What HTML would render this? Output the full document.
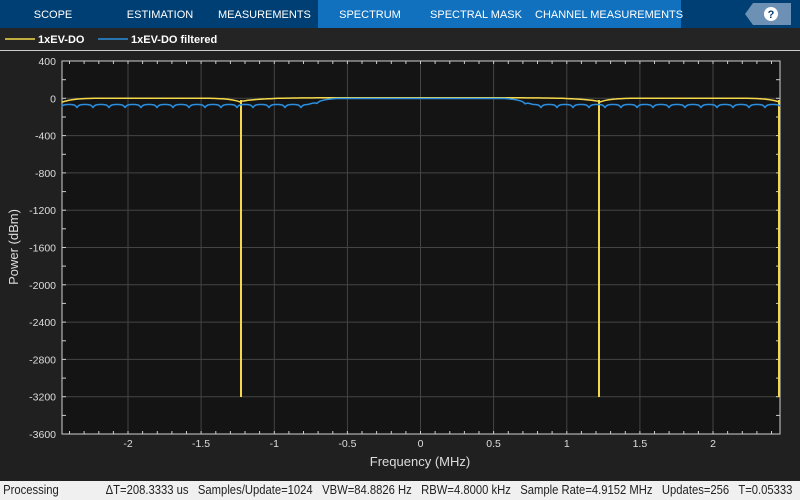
<!DOCTYPE html>
<html><head><meta charset="utf-8"><style>
body{margin:0;width:800px;height:500px;background:#202020;overflow:hidden;font-family:"Liberation Sans",sans-serif;position:relative}
.top{position:absolute;left:0;top:0;width:800px;height:28px;background:#003f73}
.tab{position:absolute;top:0;height:28px;line-height:30px;color:#fff;font-size:11px;text-align:center;white-space:nowrap}
.act{position:absolute;left:318px;top:0;width:363px;height:28px;background:#1171be}
.leg{position:absolute;left:0;top:28px;width:800px;height:22px;background:#242424;border-bottom:1px solid #ccc}
.status{position:absolute;left:0;top:481px;width:900px;height:19px;background:#f0f0f0;font-size:12.5px;color:#222;line-height:19px;white-space:nowrap;transform:scaleX(0.9);transform-origin:0 0;overflow:hidden}
</style></head><body>
<div class="top"></div>
<div class="act"></div>
<div class="tab" style="left:20px;width:66px">SCOPE</div>
<div class="tab" style="left:118px;width:84px">ESTIMATION</div>
<div class="tab" style="left:218px;width:92px">MEASUREMENTS</div>
<div class="tab" style="left:330px;width:80px">SPECTRUM</div>
<div class="tab" style="left:430px;width:92px">SPECTRAL MASK</div>
<div class="tab" style="left:535px;width:140px">CHANNEL MEASUREMENTS</div>
<svg style="position:absolute;left:745px;top:3px" width="46" height="22"><polygon points="0,11 8,0 46,0 46,22 8,22" fill="#6c91b4"/><circle cx="26" cy="11" r="7" fill="#fff"/><text x="26" y="15" font-size="11" font-weight="bold" text-anchor="middle" fill="#003f73" font-family="Liberation Sans">?</text></svg>
<div class="leg"></div>
<svg id="s" style="position:absolute;left:0;top:0" width="800" height="500">
<line x1="5" y1="39" x2="35" y2="39" stroke="#f5d94a" stroke-width="1.5"/>
<text x="38" y="43" fill="#fff" font-size="11" font-weight="bold" font-family="Liberation Sans">1xEV-DO</text>
<line x1="98" y1="39" x2="128" y2="39" stroke="#2a8fe0" stroke-width="1.5"/>
<text x="131" y="43" fill="#fff" font-size="11" font-weight="bold" font-family="Liberation Sans">1xEV-DO filtered</text>
<rect x="62" y="61" width="718" height="373" fill="#141414" stroke="#d0d0d0" stroke-width="1"/>
<g id="g"></g>
<text x="420" y="466" fill="#ddd" font-size="13" text-anchor="middle" font-family="Liberation Sans">Frequency (MHz)</text>
<text transform="translate(18,247) rotate(-90)" fill="#ddd" font-size="13" text-anchor="middle" font-family="Liberation Sans">Power (dBm)</text>
</svg>
<div class="status">&nbsp;Processing&nbsp;&nbsp;&nbsp;&nbsp;&nbsp;&nbsp;&nbsp;&nbsp;&nbsp;&nbsp;&nbsp;&nbsp;&nbsp;&nbsp;&nbsp;ΔT=208.3333 us&nbsp;&nbsp; Samples/Update=1024&nbsp;&nbsp; VBW=84.8826 Hz&nbsp;&nbsp; RBW=4.8000 kHz&nbsp;&nbsp; Sample Rate=4.9152 MHz&nbsp;&nbsp; Updates=256&nbsp;&nbsp; T=0.05333</div>
<script>
var g=document.getElementById('g'),h='';
function X(f){return 420.5+f*146.25}function Y(v){return 61+(400-v)*0.09325}
for(var v=400;v>=-3600;v-=400){var y=Y(v).toFixed(1);if(v<400&&v>-3600)h+='<line x1="62" x2="780" y1="'+y+'" y2="'+y+'" stroke="#444"/>';
h+='<text x="56" y="'+(+y+4)+'" fill="#ddd" font-size="10.5" text-anchor="end" font-family="Liberation Sans">'+(v)+'</text>';}
for(v=400;v>=-3600;v-=200){y=Y(v).toFixed(1);h+='<line x1="62" x2="66" y1="'+y+'" y2="'+y+'" stroke="#ccc"/><line x1="776" x2="780" y1="'+y+'" y2="'+y+'" stroke="#ccc"/>';}
for(var f=-2;f<=2;f+=0.5){var x=X(f).toFixed(1);h+='<line y1="61" y2="434" x1="'+x+'" x2="'+x+'" stroke="#444"/><text x="'+x+'" y="447" fill="#ddd" font-size="10.5" text-anchor="middle" font-family="Liberation Sans">'+f+'</text>';}
for(f=-2.4;f<=2.45;f+=0.1){x=X(f).toFixed(1);h+='<line y1="61" y2="64" x1="'+x+'" x2="'+x+'" stroke="#ccc"/><line y1="431" y2="434" x1="'+x+'" x2="'+x+'" stroke="#ccc"/>';}
var p='';for(x=62;x<=780;x+=2){var seg=(x<241)?[62,241]:(x<599?[241,599]:[599,780]);
var t=(x-seg[0])/(seg[1]-seg[0]);var yy=98.2+4*Math.pow(2*t-1,8);if(seg[0]==241)yy=97.8+3.5*Math.pow(2*t-1,8);
p+=(p?' L':'M')+x+','+yy.toFixed(1);}
h+='<path d="'+p+'" fill="none" stroke="#f5d94a" stroke-width="1.5"/>';
[241,599,779].forEach(function(x){h+='<line x1="'+x+'" x2="'+x+'" y1="100" y2="397" stroke="#f5d94a" stroke-width="2"/>';});
p='M62,104.5';for(x=62;x<=780;x+=1){var b;var ph=((x-61)%16+16)%16;var sc=104.5+Math.pow(1-Math.min(ph,16-ph)/8,4)*3;
if(x<308||x>533)b=sc;else if(x<338)b=sc+(98.5-sc)*Math.sin((x-308)/30*Math.PI/2);else if(x>503)b=98.5+(sc-98.5)*(1-Math.cos((x-503)/30*Math.PI/2));else b=98.5;p+=' L'+x+','+b.toFixed(1);}
h+='<path d="'+p+'" fill="none" stroke="#2a8fe0" stroke-width="1.5"/>';
g.innerHTML=h;
</script>
</body></html>
